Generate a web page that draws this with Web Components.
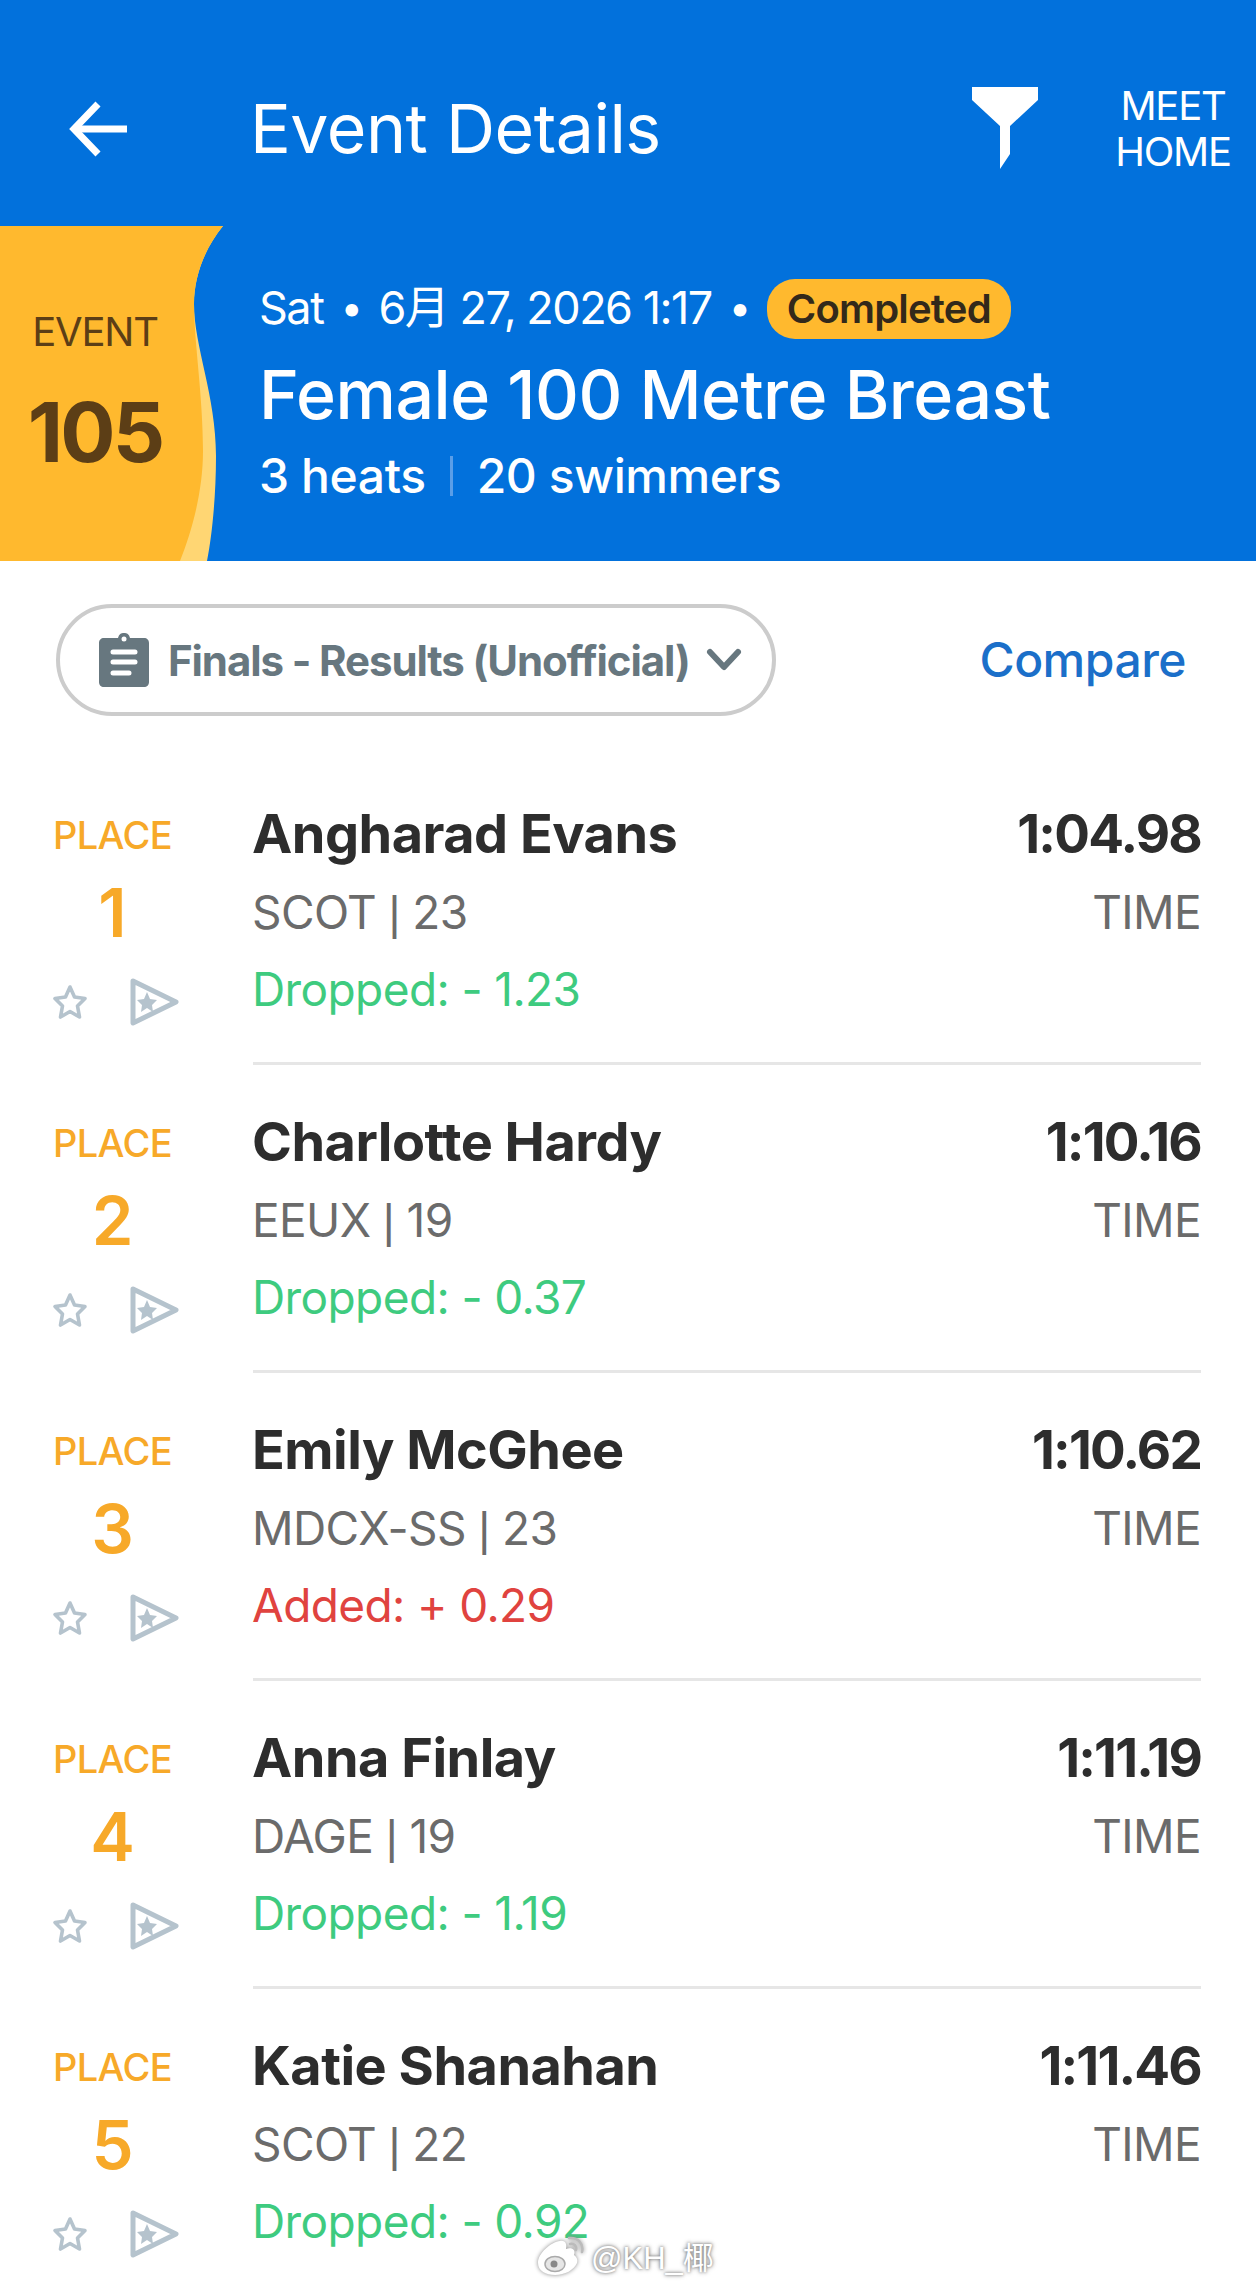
<!DOCTYPE html>
<html>
<head>
<meta charset="utf-8">
<title>Event Details</title>
<style>
  html, body { margin: 0; padding: 0; background: #fff; }
  body { font-family: Inter, "Noto Sans CJK SC", sans-serif; width: 1256px; height: 2286px; overflow: hidden; position: relative; }
</style>
</head>
<body>
<app-header></app-header>
<event-band></event-band>
<round-bar></round-bar>
<result-row place="1" time="1:04.98" team="SCOT" age="23" kind="drop" delta="Dropped: - 1.23">Angharad Evans</result-row>
<result-row place="2" time="1:10.16" team="EEUX" age="19" kind="drop" delta="Dropped: - 0.37">Charlotte Hardy</result-row>
<result-row place="3" time="1:10.62" team="MDCX-SS" age="23" kind="add" delta="Added: + 0.29">Emily McGhee</result-row>
<result-row place="4" time="1:11.19" team="DAGE" age="19" kind="drop" delta="Dropped: - 1.19">Anna Finlay</result-row>
<result-row place="5" time="1:11.46" team="SCOT" age="22" kind="drop" delta="Dropped: - 0.92">Katie Shanahan</result-row>
<water-mark></water-mark>

<script>
class AppHeader extends HTMLElement {
  constructor() {
    super();
    this.attachShadow({ mode: "open" });
  }
  connectedCallback() {
    this.shadowRoot.innerHTML = `
      <style>
        :host { display: flex; align-items: center; height: 226px; background: #0271dc; color: #fff; box-sizing: border-box; padding: 29px 24px 0 69px; }
        .back { width: 60px; height: 56px; margin-right: 121px; margin-top: 3px; flex: none; }
        h1 { margin: 0; font-size: 68px; font-weight: 400; letter-spacing: -.5px; flex: 1; }
        .funnel { width: 66px; height: 82px; margin-right: 76px; flex: none; }
        .home { font-size: 40px; line-height: 46px; margin-top: 3px; text-align: center; letter-spacing: -1.2px; width: 118px; flex: none; }
      </style>
      <svg class="back" viewBox="0 0 60 56" fill="none" stroke="#fff" stroke-width="7"><path d="M58 28H6"/><path d="M29 3L5 28l24 25"/></svg>
      <h1>Event Details</h1>
      <svg class="funnel" viewBox="0 0 66 82" fill="#fff"><path d="M0 0H66V13L38 39V67L28 82V39L0 13Z"/></svg>
      <div class="home">MEET<br>HOME</div>`;
  }
}

class EventBand extends HTMLElement {
  constructor() {
    super();
    this.attachShadow({ mode: "open" });
  }
  connectedCallback() {
    this.shadowRoot.innerHTML = `
      <style>
        :host { display: flex; height: 335px; background: #0271dc; color: #fff; position: relative; }
        .wave { position: absolute; left: 0; top: 0; width: 224px; height: 335px; }
        .tag { position: relative; width: 190px; flex: none; display: flex; flex-direction: column; align-items: center; color: #5c3e16; }
        .tag .lbl { font-size: 40px; letter-spacing: -1.2px; margin-top: 81px; line-height: 50px; }
        .tag .num { font-size: 82px; font-weight: 700; letter-spacing: -2.8px; line-height: 90px; margin-top: 31px; }
        .info { margin-left: 69px; padding-top: 51px; }
        .when { display: flex; align-items: center; font-size: 45px; letter-spacing: -1.5px; line-height: 60px; }
        .dot { margin: 0 17px; font-size: 40px; }
        .badge { background: #ffb92e; color: #33291a; font-size: 40px; font-weight: 600; letter-spacing: -.8px; border-radius: 28px; height: 60px; line-height: 60px; padding: 0 20px; margin-top: 2px; }
        .name { font-size: 68px; font-weight: 500; line-height: 78px; margin-top: 16px; letter-spacing: -.5px; }
        .meta { display: flex; align-items: center; font-size: 48px; font-weight: 500; line-height: 60px; margin-top: 13px; letter-spacing: -.4px; }
        .bar { width: 3px; height: 40px; background: #5a9ee8; margin: 0 24px; }
      </style>
      <svg class="wave" viewBox="0 0 224 335">
        <path fill="#ffd673" d="M0 0H223C205 22 194 50 194 78C194 120 216 170 216 230C216 270 212 310 207 335H0Z"/>
        <path fill="#ffb92e" d="M0 0H223C205 22 194 50 194 78C194 115 203 170 203 225C203 265 192 305 180 335H0Z"/>
      </svg>
      <div class="tag"><span class="lbl">EVENT</span><span class="num">105</span></div>
      <div class="info">
        <div class="when"><span>Sat</span><span class="dot">•</span><span>6月 27, 2026 1:17</span><span class="dot">•</span><span class="badge">Completed</span></div>
        <div class="name">Female 100 Metre Breast</div>
        <div class="meta"><span>3 heats</span><span class="bar"></span><span>20 swimmers</span></div>
      </div>`;
  }
}

class RoundBar extends HTMLElement {
  constructor() {
    super();
    this.attachShadow({ mode: "open" });
  }
  connectedCallback() {
    this.shadowRoot.innerHTML = `
      <style>
        :host { display: flex; align-items: center; justify-content: space-between; padding: 43px 70px 41px 56px; height: 196px; box-sizing: border-box; background: #fff; }
        .pill { display: flex; align-items: center; width: 720px; height: 112px; box-sizing: border-box; border: 4px solid #cccccc; border-radius: 56px; padding-left: 39px; color: #67777f; font-size: 42px; font-weight: 700; letter-spacing: -1.1px; }
        .clip { width: 50px; height: 54px; margin-right: 19px; flex: none; }
        .chev { width: 36px; height: 24px; margin-left: 16px; }
        a { color: #1b6fc9; font-size: 48px; font-weight: 500; letter-spacing: -.5px; text-decoration: none; margin-top: -2px; }
      </style>
      <div class="pill">
        <svg class="clip" viewBox="0 0 50 54"><path fill="#67777f" d="M5 5H19C20 1 22 0 25 0S30 1 31 5H45C48 5 50 7 50 10V49C50 52 48 54 45 54H5C2 54 0 52 0 49V10C0 7 2 5 5 5Z"/><circle cx="25" cy="6" r="2.5" fill="#fff"/><g stroke="#fff" stroke-width="5" stroke-linecap="round"><path d="M14 19H36M14 29H36M14 40H30"/></g></svg>
        <span>Finals - Results (Unofficial)</span>
        <svg class="chev" viewBox="0 0 36 24" fill="none" stroke="#67777f" stroke-width="6" stroke-linecap="round" stroke-linejoin="round"><path d="M4 4L18 19L32 4"/></svg>
      </div>
      <a href="#compare">Compare</a>`;
  }
}

class ResultRow extends HTMLElement {
  constructor() {
    super();
    this.attachShadow({ mode: "open" });
  }
  connectedCallback() {
    const place = this.getAttribute("place");
    const kind = this.getAttribute("kind");
    this.shadowRoot.innerHTML = `
      <style>
        :host { display: flex; height: 308px; background: #fff; }
        .side { width: 225px; flex: none; display: flex; flex-direction: column; align-items: center; color: #f7a929; }
        .lbl { font-size: 38px; font-weight: 500; letter-spacing: -.6px; line-height: 44px; margin-top: 56px; }
        .num { font-size: 67px; font-weight: 600; line-height: 76px; margin-top: 18px; }
        .acts { display: flex; align-items: center; gap: 42px; margin-top: 27px; margin-left: 7px; }
        .star { width: 36px; height: 36px; }
        .flag { width: 50px; height: 48px; }
        .main { flex: 1; margin: 0 55px 0 28px; border-bottom: 3px solid #e6e6e6; display: grid; grid-template-columns: 1fr auto; grid-auto-rows: 78px; align-content: start; padding-top: 38px; }
        .name { font-size: 54px; font-weight: 700; color: #2d2d2d; letter-spacing: -.5px; line-height: 78px; margin-left: -1px; }
        .time { font-size: 53px; font-weight: 700; color: #2d2d2d; letter-spacing: -1.8px; line-height: 78px; text-align: right; }
        .sub { font-size: 46px; color: #6b6b6b; letter-spacing: -.6px; line-height: 78px; margin-left: -1px; }
        .sub.r { text-align: right; }
        .pipe { font-family: "Liberation Sans", sans-serif; }
        .delta { font-size: 46px; letter-spacing: -.6px; line-height: 78px; grid-column: 1 / 3; margin: -1px 0 0 -1px; }
        .drop { color: #3ecb7f; }
        .add { color: #e0433f; }
      </style>
      <div class="side">
        <span class="lbl">PLACE</span>
        <span class="num">${place}</span>
        <div class="acts">
          <svg class="star" viewBox="0 0 36 36" fill="none" stroke="#b5c3cd" stroke-width="3.6" stroke-linejoin="round"><path d="M18 3L22.5 13L33 14.5L25.5 22L27.5 33L18 27.5L8.5 33L10.5 22L3 14.5L13.5 13Z"/></svg>
          <svg class="flag" viewBox="0 0 50 48"><path fill="none" stroke="#b5c3cd" stroke-width="5" stroke-linejoin="round" d="M3 3L46 24L3 45Z"/><path fill="#b5c3cd" d="M17 14L20 21L27 22L22 27L23 34L17 30L11 34L12 27L7 22L14 21Z"/></svg>
        </div>
      </div>
      <div class="main">
        <div class="name"><slot></slot></div>
        <div class="time">${this.getAttribute("time")}</div>
        <div class="sub">${this.getAttribute("team")} <span class="pipe">|</span> ${this.getAttribute("age")}</div>
        <div class="sub r">TIME</div>
        <div class="delta ${kind}">${this.getAttribute("delta")}</div>
      </div>`;
  }
}

class WaterMark extends HTMLElement {
  constructor() {
    super();
    this.attachShadow({ mode: "open" });
  }
  connectedCallback() {
    this.shadowRoot.innerHTML = `
      <style>
        :host { position: absolute; left: 537px; top: 2233px; display: flex; align-items: center; gap: 6px; color: #fff; font-family: "Liberation Sans", "Noto Sans CJK SC", sans-serif; font-size: 31px; text-shadow: 0 0 3px #777, 0 0 5px #999; }
        svg { width: 48px; height: 40px; filter: drop-shadow(0 0 2px #888); }
      </style>
      <svg viewBox="0 0 48 40"><path fill="#fff" d="M1 27C1 17 14 6 23 5C29 4 30 9 29 13C35 11 39 14 37 19C40 21 41 24 40 27C37 34 28 39 18 39C9 39 1 35 1 27Z"/><ellipse cx="18" cy="28" rx="10" ry="7.5" fill="#e6e6e6" stroke="#aaa" stroke-width="1.5"/><circle cx="17" cy="28" r="3.5" fill="#888"/><path d="M32 2C41 1 47 8 45 16M33 8C37 7 40 10 39 14" fill="none" stroke="#bbb" stroke-width="2.5" stroke-linecap="round"/></svg>
      <span>@KH_椰</span>`;
  }
}

customElements.define("app-header", AppHeader);
customElements.define("event-band", EventBand);
customElements.define("round-bar", RoundBar);
customElements.define("result-row", ResultRow);
customElements.define("water-mark", WaterMark);
</script>
</body>
</html>
